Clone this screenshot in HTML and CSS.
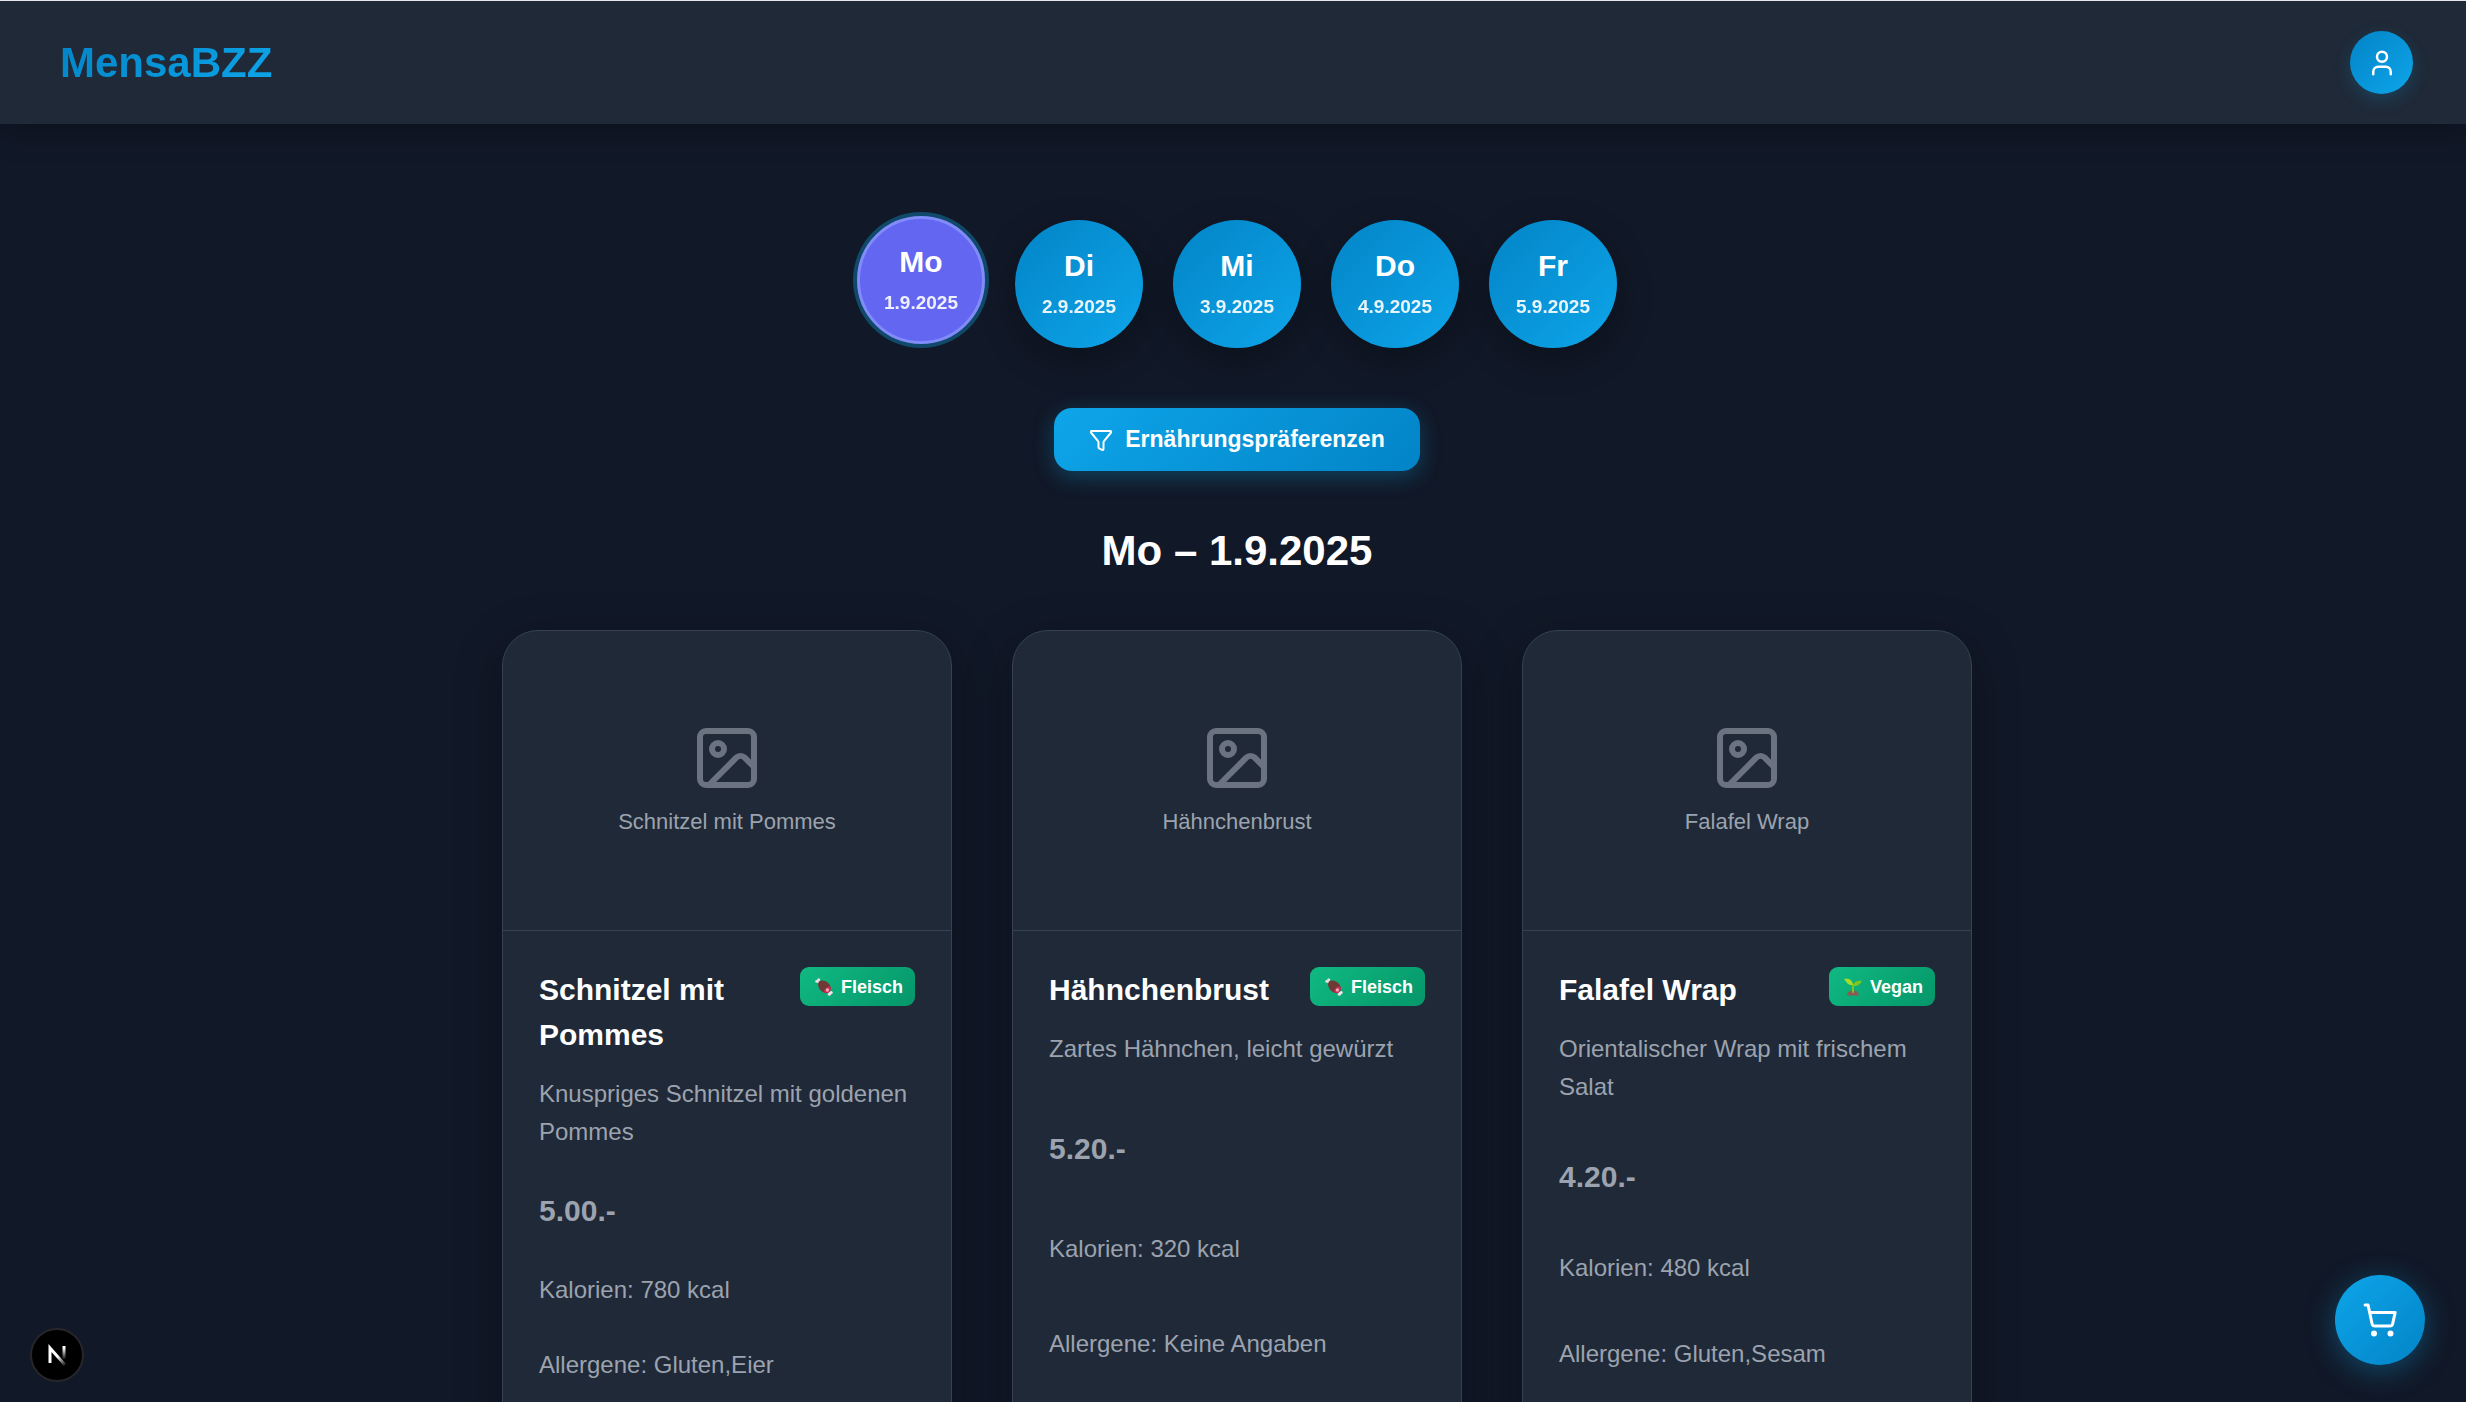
FILE: index.html
```html
<!DOCTYPE html>
<html lang="de">
<head>
    <meta charset="UTF-8">
    <meta name="viewport" content="width=device-width, initial-scale=1.0">
    <title>MensaBZZ</title>
    <link rel="stylesheet" href="styles.css">
</head>
<body>
    <!-- shared icons -->
    <svg class="sprite" aria-hidden="true">
        <symbol id="icon-image" viewBox="0 0 24 24">
            <rect x="3" y="3" width="18" height="18" rx="2"/>
            <circle cx="9" cy="9" r="2"/>
            <path d="m21 15-3.086-3.086a2 2 0 0 0-2.828 0L6 21"/>
        </symbol>
        <symbol id="icon-meat" viewBox="0 0 18 18">
            <path d="M3 3.5 6 6.5M12 12.5l3.5 3" stroke="#e6dfe2" stroke-width="2.4" stroke-linecap="round"/>
            <circle cx="1.8" cy="3.3" r="1.5" fill="#e6dfe2"/>
            <circle cx="3.7" cy="1.7" r="1.5" fill="#e6dfe2"/>
            <path d="M4 3.5C7 1.3 12 2.8 14.5 6.5c1.6 2.5 1.7 5.4.2 7.2-2.2 2.2-6.2 1.5-8.9-1.2C3.2 9.8 2.2 5.6 4 3.5z" fill="#6f3a36"/>
            <path d="M15.2 8.2c.9 2.1.8 4.2-.5 5.5-1.5 1.5-3.8 1.6-5.9.6.2-3 2.9-5.9 6.4-6.1z" fill="#c92a50"/>
            <circle cx="12.4" cy="12" r="1.7" fill="#f0a9b8"/>
            <circle cx="16.2" cy="14.5" r="1.5" fill="#eee8ea"/>
            <circle cx="14.3" cy="16.3" r="1.5" fill="#eee8ea"/>
        </symbol>
        <symbol id="icon-plant" viewBox="0 0 18 18">
            <path d="M3 17.5c.2-3.2 2.8-5 6-5s5.6 1.8 6 5z" fill="#8b5a52"/>
            <path d="M9 14V7" stroke="#7cc623" stroke-width="2" stroke-linecap="round"/>
            <path d="M0 1c4.5-1 8.6.7 9 6C4.8 7.6 2.8 5.2 0 1z" fill="#a5dc2c"/>
            <path d="M18 2.8c-4.8-.6-8.4.8-9 4.8 4.2 1.2 7.2-.6 9-4.8z" fill="#7cc623"/>
        </symbol>
    </svg>

    <header class="header">
        <a href="#" class="logo">MensaBZZ</a>
        <button class="profile-button" aria-label="Profil">
            <svg class="icon" width="30" height="30" viewBox="0 0 24 24">
                <path d="M19 21v-2a4 4 0 0 0-4-4H9a4 4 0 0 0-4 4v2"/>
                <circle cx="12" cy="7" r="4"/>
            </svg>
        </button>
    </header>

    <main class="main">
        <nav class="days">
            <button class="day active"><span class="day-name">Mo</span><span class="day-date">1.9.2025</span></button>
            <button class="day"><span class="day-name">Di</span><span class="day-date">2.9.2025</span></button>
            <button class="day"><span class="day-name">Mi</span><span class="day-date">3.9.2025</span></button>
            <button class="day"><span class="day-name">Do</span><span class="day-date">4.9.2025</span></button>
            <button class="day"><span class="day-name">Fr</span><span class="day-date">5.9.2025</span></button>
        </nav>

        <button class="filter-button">
            <svg class="icon" width="24" height="24" viewBox="0 0 24 24">
                <path d="M9.500 19.500a1 1 0 0 0 .6.900l3 1.500A1 1 0 0 0 14.500 21v-6.500a2 2 0 0 1 .5-1.300L22 4.500A1 1 0 0 0 21.500 3H2.500A1 1 0 0 0 2 4.500l7 8.700a2 2 0 0 1 .5 1.300z"/>
            </svg>
            <span>Ernährungspräferenzen</span>
        </button>

        <h1 class="title">Mo – 1.9.2025</h1>

        <div class="menu">
            <article class="card">
                <div class="card-image">
                    <svg class="icon" width="72" height="72"><use href="#icon-image"/></svg>
                    <span>Schnitzel mit Pommes</span>
                </div>
                <div class="card-body">
                    <div class="card-info">
                        <div class="card-head">
                            <h2>Schnitzel mit Pommes</h2>
                            <span class="badge"><svg width="18" height="18"><use href="#icon-meat"/></svg>Fleisch</span>
                        </div>
                        <p>Knuspriges Schnitzel mit goldenen Pommes</p>
                    </div>
                    <p class="price">5.00.-</p>
                    <p>Kalorien: 780 kcal</p>
                    <p>Allergene: Gluten,Eier</p>
                    <div class="card-footer"></div>
                </div>
            </article>

            <article class="card">
                <div class="card-image">
                    <svg class="icon" width="72" height="72"><use href="#icon-image"/></svg>
                    <span>Hähnchenbrust</span>
                </div>
                <div class="card-body">
                    <div class="card-info">
                        <div class="card-head">
                            <h2>Hähnchenbrust</h2>
                            <span class="badge"><svg width="18" height="18"><use href="#icon-meat"/></svg>Fleisch</span>
                        </div>
                        <p>Zartes Hähnchen, leicht gewürzt</p>
                    </div>
                    <p class="price">5.20.-</p>
                    <p>Kalorien: 320 kcal</p>
                    <p>Allergene: Keine Angaben</p>
                    <div class="card-footer"></div>
                </div>
            </article>

            <article class="card">
                <div class="card-image">
                    <svg class="icon" width="72" height="72"><use href="#icon-image"/></svg>
                    <span>Falafel Wrap</span>
                </div>
                <div class="card-body">
                    <div class="card-info">
                        <div class="card-head">
                            <h2>Falafel Wrap</h2>
                            <span class="badge"><svg width="18" height="18"><use href="#icon-plant"/></svg>Vegan</span>
                        </div>
                        <p>Orientalischer Wrap mit frischem Salat</p>
                    </div>
                    <p class="price">4.20.-</p>
                    <p>Kalorien: 480 kcal</p>
                    <p>Allergene: Gluten,Sesam</p>
                    <div class="card-footer"></div>
                </div>
            </article>
        </div>
    </main>

    <button class="cart-button" aria-label="Warenkorb">
        <svg class="icon" width="36" height="36" viewBox="0 0 24 24">
            <circle cx="8" cy="21" r="1"/>
            <circle cx="19" cy="21" r="1"/>
            <path d="M2.05 2.05h2l2.66 12.42a2 2 0 0 0 2 1.58h9.78a2 2 0 0 0 1.95-1.57l1.65-7.43H5.12"/>
        </svg>
    </button>

    <button class="dev-button" aria-label="Next.js">
        <svg width="20" height="22" viewBox="0 0 20 22" fill="none">
            <defs>
                <linearGradient id="fade-diagonal" gradientUnits="userSpaceOnUse" x1="11" y1="12" x2="19" y2="22">
                    <stop stop-color="#fff"/>
                    <stop offset="1" stop-color="#fff" stop-opacity="0"/>
                </linearGradient>
                <linearGradient id="fade-stem" gradientUnits="userSpaceOnUse" x1="17" y1="4" x2="17" y2="16">
                    <stop stop-color="#fff"/>
                    <stop offset="1" stop-color="#fff" stop-opacity="0"/>
                </linearGradient>
            </defs>
            <path d="M3 19V4L18 21" stroke="url(#fade-diagonal)" stroke-width="3"/>
            <path d="M17 2v13" stroke="url(#fade-stem)" stroke-width="3"/>
        </svg>
    </button>
</body>
</html>
```
FILE: styles.css
```css
:root {
    --primary: #0ea5e9;
    --primary-dark: #0284c7;
    --active: #6366f1;
    --background: #111827;
    --surface: #1f2937;
    --border: #364252;
    --text: #ffffff;
    --text-secondary: #9ca3af;
}

* {
    box-sizing: border-box;
}

body {
    margin: 0;
    border-top: 1px solid #e5e7eb;
    background: var(--background);
    color: var(--text);
    font-family: Arial, 'Liberation Sans', sans-serif;
    font-size: 24px;
    line-height: 38px;
}

h1, h2, p {
    margin: 0;
}

button {
    display: flex;
    align-items: center;
    justify-content: center;
    padding: 0;
    border: none;
    color: var(--text);
    font-family: inherit;
    font-weight: 700;
    cursor: pointer;
}

.sprite {
    display: none;
}

.icon {
    fill: none;
    stroke: currentColor;
    stroke-width: 2;
    stroke-linecap: round;
    stroke-linejoin: round;
}

.header {
    display: flex;
    align-items: center;
    justify-content: space-between;
    padding: 30px 53px 30px 60px;
    background: var(--surface);
    box-shadow: 0 6px 30px rgba(0, 0, 0, 0.3);
}

.logo {
    font-size: 42px;
    line-height: 63px;
    font-weight: 700;
    text-decoration: none;
    background: linear-gradient(135deg, var(--primary-dark), var(--primary));
    -webkit-background-clip: text;
    background-clip: text;
    color: transparent;
}

.profile-button {
    width: 63px;
    height: 63px;
    border-radius: 50%;
    background: linear-gradient(135deg, var(--primary-dark), var(--primary));
    box-shadow: 0 6px 18px rgba(14, 165, 233, 0.2);
}

.main {
    display: flex;
    flex-direction: column;
    align-items: center;
    padding: 96px 0 96px 8px;
}

/* Day picker */
.days {
    display: flex;
    gap: 30px;
    margin-bottom: 60px;
}

.day {
    flex-direction: column;
    gap: 6px;
    width: 128px;
    height: 128px;
    border-radius: 50%;
    background: linear-gradient(135deg, var(--primary-dark), var(--primary));
    box-shadow: 0 12px 36px rgba(0, 0, 0, 0.3);
}

.day.active {
    background: var(--active);
    border: 3px solid #818cf8;
    box-shadow: 0 0 0 4px rgba(14, 165, 233, 0.35);
    transform: translateY(-4px);
}

.day-name {
    font-size: 30px;
    line-height: 40px;
}

.day-date {
    font-size: 19px;
    line-height: 30px;
    opacity: 0.9;
}

.filter-button {
    gap: 12px;
    height: 63px;
    margin-bottom: 48px;
    padding: 0 35px;
    border-radius: 18px;
    background: linear-gradient(135deg, var(--primary), var(--primary-dark));
    box-shadow: 0 6px 22px rgba(14, 165, 233, 0.3);
    font-size: 23px;
}

.title {
    margin-bottom: 48px;
    font-size: 42px;
    line-height: 63px;
}

/* Menu cards */
.menu {
    display: grid;
    grid-template-columns: repeat(3, 1fr);
    gap: 60px;
    width: 100%;
    max-width: 1470px;
}

.card {
    display: flex;
    flex-direction: column;
    overflow: hidden;
    background: var(--surface);
    border: 1px solid var(--border);
    border-radius: 36px;
    box-shadow: 0 12px 48px rgba(0, 0, 0, 0.3);
}

.card-image {
    display: flex;
    flex-direction: column;
    align-items: center;
    justify-content: center;
    gap: 10px;
    height: 300px;
    border-bottom: 1px solid var(--border);
    color: var(--text-secondary);
    font-size: 22px;
    line-height: 35px;
}

.card-image .icon {
    color: #6b7280;
}

.card-body {
    display: flex;
    flex-direction: column;
    flex: 1;
    justify-content: space-between;
    gap: 37px;
    padding: 36px;
    color: var(--text-secondary);
}

.card-head {
    display: flex;
    align-items: flex-start;
    justify-content: space-between;
    gap: 18px;
    margin-bottom: 18px;
    color: var(--text);
}

.card-head h2 {
    font-size: 30px;
    line-height: 45px;
}

.badge {
    display: flex;
    align-items: center;
    gap: 8px;
    height: 39px;
    padding: 0 12px 0 15px;
    border-radius: 9px;
    background: linear-gradient(135deg, #10b981, #059669);
    font-size: 18px;
    font-weight: 700;
}

.price {
    font-size: 30px;
    line-height: 46px;
    font-weight: 700;
}

.card-footer {
    height: 60px;
}

/* Floating buttons */
.cart-button {
    position: fixed;
    right: 41px;
    bottom: 37px;
    width: 90px;
    height: 90px;
    border-radius: 50%;
    background: linear-gradient(135deg, var(--primary), var(--primary-dark));
    box-shadow: 0 6px 30px rgba(14, 165, 233, 0.35);
}

.dev-button {
    position: fixed;
    left: 30px;
    bottom: 20px;
    width: 54px;
    height: 54px;
    border: 2px solid #27272a;
    border-radius: 50%;
    background: #000000;
}
```
